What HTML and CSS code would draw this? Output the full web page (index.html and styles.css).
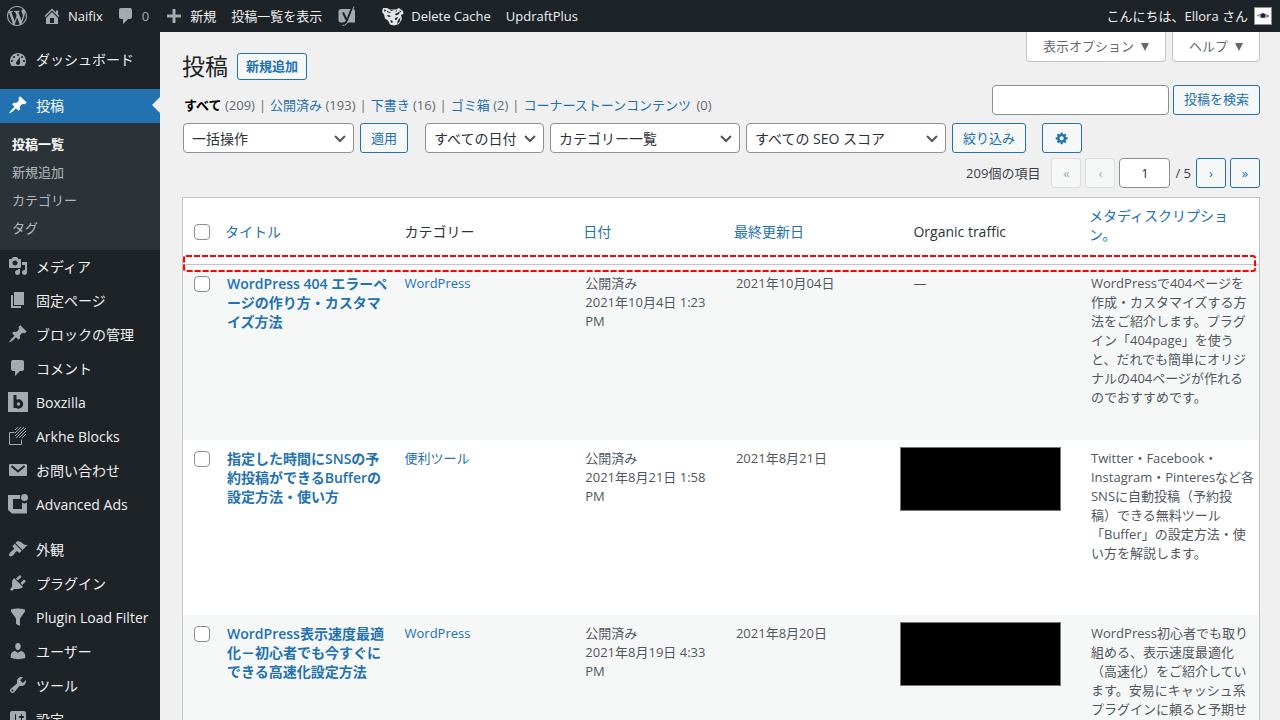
FILE: index.html
```html
<!DOCTYPE html>
<html lang="ja">
<head>
<meta charset="utf-8">
<meta name="viewport" content="width=device-width, initial-scale=1">
<title>投稿 ‹ Naifix — WordPress</title>
<link rel="stylesheet" href="styles.css">
</head>
<body>
<header class="adminbar">
  <a class="bar-item bar-wp" href="#" aria-label="WordPress"><svg class="icon" viewBox="0 0 20 20"><path d="M20 10c0-5.51-4.49-10-10-10C4.48 0 0 4.49 0 10c0 5.52 4.48 10 10 10 5.51 0 10-4.48 10-10zM7.78 15.37L4.37 6.22c.55-.02 1.17-.08 1.17-.08.5-.06.44-1.13-.06-1.11 0 0-1.45.11-2.37.11-.18 0-.37 0-.58-.01C4.12 2.69 6.87 1.11 10 1.11c2.33 0 4.45.87 6.05 2.34-.68-.11-1.65.39-1.65 1.58 0 .74.45 1.36.9 2.1.35.61.55 1.36.55 2.46 0 1.49-1.4 5-1.4 5l-3.03-8.37c.54-.02.82-.17.82-.17.5-.05.44-1.25-.06-1.22 0 0-1.44.12-2.38.12-.87 0-2.33-.12-2.33-.12-.5-.03-.56 1.2-.06 1.22l.92.08 1.26 3.41zM17.41 10c.24-.64.74-1.87.43-4.25.7 1.29 1.05 2.71 1.05 4.25 0 3.29-1.73 6.24-4.4 7.78.97-2.59 1.94-5.2 2.92-7.78zM6.1 18.09C3.12 16.65 1.11 13.53 1.11 10c0-1.3.23-2.48.72-3.59C3.25 10.3 4.67 14.2 6.1 18.09zm4.03-6.63l2.58 6.98c-.86.29-1.76.45-2.71.45-.79 0-1.57-.11-2.29-.33.81-2.38 1.62-4.74 2.42-7.1z"/></svg></a>
  <a class="bar-item bar-site" href="#"><svg class="icon" viewBox="0 0 20 20"><path d="M16 8.5l1.53 1.53-1.06 1.06L10 4.6l-6.47 6.49-1.06-1.06L10 2.5l4 4v-2h2v4zm-6-2.46l6 5.99V18H4v-5.97zM12 17v-5H8v5h4z"/></svg>Naifix</a>
  <a class="bar-item bar-comments" href="#"><svg class="icon" viewBox="0 0 20 20"><path d="M5 2h9c1.1 0 2 .9 2 2v7c0 1.1-.9 2-2 2h-2l-5 5v-5H5c-1.1 0-2-.9-2-2V4c0-1.1.9-2 2-2z"/></svg><span class="dim">0</span></a>
  <a class="bar-item bar-new" href="#"><svg class="icon" viewBox="0 0 20 20"><path d="M8.500 3h3v5.500H17v3h-5.500V17h-3v-5.500H3v-3h5.500z"/></svg>新規</a>
  <a class="bar-item bar-view" href="#">投稿一覧を表示</a>
  <a class="bar-item bar-seo" href="#" aria-label="SEO"><svg class="icon" viewBox="0 0 20 20"><path d="M4 3h11.500A2.500 2.500 0 0 1 18 5.500v11H4A2.500 2.500 0 0 1 1.500 14V5.500A2.500 2.500 0 0 1 4 3z"/><path class="seo-cut" d="M6 6.500l3.300 7M15.500 1L10 14.500Q8.800 17.500 5.500 18"/><path class="seo-edge" d="M17 .5L11.500 14.500Q10 19.300 5.500 19.500"/></svg></a>
  <a class="bar-item bar-cache" href="#"><svg class="icon-tiger" viewBox="0 0 24 20"><path class="tiger-face" d="M2 2l4 0 3 1.500h6L18 2l4 3 .5 3-2.500 1 1 4-3 5-5 1.500-4-1-2-4-3-2-1-4L1 6z"/><path class="tiger-mark" d="M3 3.500l2.500.5-2 2zM6 5l4 1.500-1 .5-3-1zM9 3.800l4 .8-3 .3zM14 8l3-1.500 2-1-1 2.500-3 1.500zM6 9l3 .6.6 1.500-2.600-.4zM14 12l3-1-1 2.500-2 .5zM18.500 4l1.800 1.500-1.300 1zM9 14.500l2 0 1 1.800-1.500.6zM17 14l2.500-2.500-1 4.500-2.500 2zM14.500 5l2-1-1.500 2z"/></svg>Delete Cache</a>
  <a class="bar-item" href="#">UpdraftPlus</a>
  <a class="bar-item bar-user" href="#">こんにちは、Ellora さん<svg class="avatar" viewBox="0 0 18 18"><rect class="avatar-bg" width="18" height="18"/><path class="eye-lid" d="M3 9q5-4 12 0-5 3-9 1"/><circle class="eye" cx="9" cy="8.500" r="2.300"/></svg></a>
</header>
<div class="shell">
<nav class="menu" aria-label="メインメニュー">
  <a class="menu-item" href="#"><svg class="icon" viewBox="0 0 20 20"><path fill-rule="evenodd" d="M3.760 17h12.480c1.100-1.370 1.760-3.110 1.760-5 0-4.420-3.580-8-8-8s-8 3.580-8 8c0 1.890.66 3.630 1.760 5zM10 5c.55 0 1 .45 1 1s-.45 1-1 1-1-.45-1-1 .45-1 1-1zM6 7c.55 0 1 .45 1 1s-.45 1-1 1-1-.45-1-1 .45-1 1-1zm8 0c.55 0 1 .45 1 1s-.45 1-1 1-1-.45-1-1 .45-1 1-1zm-5.370 5.550L12 8v6c0 1.100-.9 2-2 2s-2-.9-2-2c0-.57.24-1.080.63-1.450zM4 11c.55 0 1 .45 1 1s-.45 1-1 1-1-.45-1-1 .45-1 1-1zm12 0c.55 0 1 .45 1 1s-.45 1-1 1-1-.45-1-1 .45-1 1-1z"/></svg>ダッシュボード</a>
  <a class="menu-item current" href="#"><svg class="icon" viewBox="0 0 20 20"><path d="M10.440 3.020l1.820-1.820 6.360 6.350-1.830 1.820c-1.050-.68-2.480-.57-3.410.36l-.75.75c-.92.93-1.040 2.350-.35 3.410l-1.830 1.820-2.410-2.410-2.800 2.790c-.42.42-3.380 2.710-3.800 2.290s1.860-3.390 2.280-3.810l2.790-2.790L4.100 9.360l1.830-1.820c1.050.69 2.480.57 3.400-.36l.75-.75c.93-.92 1.050-2.350.36-3.410z"/></svg>投稿</a>
  <div class="submenu">
    <a class="submenu-item active" href="#">投稿一覧</a>
    <a class="submenu-item" href="#">新規追加</a>
    <a class="submenu-item" href="#">カテゴリー</a>
    <a class="submenu-item" href="#">タグ</a>
  </div>
  <a class="menu-item" href="#"><svg class="icon" viewBox="0 0 20 20"><path fill-rule="evenodd" d="M13 11V4c0-.55-.45-1-1-1h-1.670L9 1H5L3.670 3H2c-.55 0-1 .45-1 1v7c0 .55.45 1 1 1h10c.55 0 1-.45 1-1zM7 4.500c1.380 0 2.500 1.120 2.500 2.500S8.380 9.500 7 9.500 4.500 8.380 4.500 7 5.620 4.500 7 4.500zM14 6h5v10.500c0 1.380-1.120 2.500-2.500 2.500S14 17.880 14 16.500s1.120-2.500 2.500-2.500c.17 0 .34.020.5.050V9h-3V6zm-4 8.050V13h2v3.500c0 1.380-1.120 2.500-2.500 2.500S7 17.880 7 16.500 8.120 14 9.500 14c.17 0 .34.020.5.050z"/></svg>メディア</a>
  <a class="menu-item" href="#"><svg class="icon" viewBox="0 0 20 20"><path d="M6 15V2h10v13H6zm-1 1h8v2H3V5h2v11z"/></svg>固定ページ</a>
  <a class="menu-item" href="#"><svg class="icon" viewBox="0 0 20 20"><path d="M10.440 3.020l1.820-1.820 6.360 6.350-1.830 1.820c-1.050-.68-2.480-.57-3.410.36l-.75.75c-.92.93-1.040 2.350-.35 3.410l-1.830 1.820-2.410-2.410-2.800 2.790c-.42.42-3.380 2.710-3.800 2.290s1.860-3.390 2.280-3.810l2.790-2.790L4.100 9.360l1.830-1.820c1.050.69 2.480.57 3.400-.36l.75-.75c.93-.92 1.050-2.350.36-3.410z"/></svg>ブロックの管理</a>
  <a class="menu-item" href="#"><svg class="icon" viewBox="0 0 20 20"><path d="M5 2h9c1.100 0 2 .9 2 2v7c0 1.100-.9 2-2 2h-2l-5 5v-5H5c-1.100 0-2-.9-2-2V4c0-1.100.9-2 2-2z"/></svg>コメント</a>
  <a class="menu-item" href="#"><svg class="icon" viewBox="0 0 20 20"><rect width="20" height="20"/><path class="cut" d="M7 3v13"/><circle class="cut" cx="10.500" cy="12" r="3.200"/></svg>Boxzilla</a>
  <a class="menu-item" href="#"><svg class="icon" viewBox="0 0 20 20"><path class="line" d="M6.500 6.500h-5v12h12v-5"/><path class="line" d="M7 4l3-3M7 7l6-6M7 10l9-9M8 12L18 2M11 12l7-7M14 12l4-4"/></svg>Arkhe Blocks</a>
  <a class="menu-item" href="#"><svg class="icon" viewBox="0 0 20 20"><rect x="1" y="4" width="18" height="12" rx="1"/><path class="cut-thin" d="M3.500 6l6.500 5.500L16.500 6"/></svg>お問い合わせ</a>
  <a class="menu-item" href="#"><svg class="icon" viewBox="0 0 20 20"><path d="M0 1h12.500a4 4 0 0 0 0 4H5v10h9V8.500a4 4 0 0 0 5 0V19.500H4L0 16z"/><circle cx="16.500" cy="3.500" r="3.500"/></svg>Advanced Ads</a>
  <div class="menu-gap"></div>
  <a class="menu-item" href="#"><svg class="icon" viewBox="0 0 20 20"><path d="M14.480 11.060L7.410 3.990l1.500-1.500c.5-.56 2.300-.47 3.510.32 1.210.8 1.430 1.280 2.910 2.100 1.180.64 2.450 1.260 4.450.85zm-.71.71L6.700 4.700 4.930 6.470c-.39.39-.39 1.020 0 1.410l1.060 1.060c.39.39.39 1.030 0 1.420-.6.6-1.430 1.110-2.210 1.690-.35.26-.7.53-1.010.84C1.430 14.230.4 16.080 1.400 17.070c.99 1 2.840-.03 4.180-1.360.31-.31.58-.66.85-1.020.57-.78 1.080-1.610 1.690-2.210.39-.39 1.020-.39 1.410 0l1.060 1.060c.39.39 1.020.39 1.410 0z"/></svg>外観</a>
  <a class="menu-item" href="#"><svg class="icon" viewBox="0 0 20 20"><path d="M13.110 4.360L9.870 7.600 8 5.730l3.240-3.240c.35-.34 1.050-.2 1.560.32.52.51.66 1.210.31 1.550zm-8 1.770l.91-1.120 9.010 9.010-1.190.84c-.71.71-2.630 1.160-3.820 1.160H6.140L4.900 17.260c-.59.59-1.540.59-2.120 0-.59-.58-.59-1.530 0-2.120l1.240-1.240v-3.880c0-1.130.4-3.190 1.090-3.890zm7.260 3.970l3.240-3.240c.34-.35 1.040-.21 1.550.31.52.51.66 1.210.31 1.550l-3.240 3.250z"/></svg>プラグイン</a>
  <a class="menu-item" href="#"><svg class="icon" viewBox="0 0 20 20"><path d="M3 4.500v-2s3.340-1 7-1 7 1 7 1v2l-5 7.030v6.970s-1.220-.09-2.250-.59S8 16.500 8 16.500v-4.970z"/></svg>Plugin Load Filter</a>
  <a class="menu-item" href="#"><svg class="icon" viewBox="0 0 20 20"><path d="M10 9.250c-2.270 0-2.730-3.440-2.730-3.440C7 4.020 7.820 2 9.970 2c2.160 0 2.980 2.020 2.710 3.810 0 0-.41 3.440-2.680 3.440zm0 2.570L12.720 10c2.390 0 4.520 2.330 4.520 4.530v2.490s-3.650 1.130-7.240 1.130c-3.650 0-7.240-1.130-7.240-1.130v-2.490c0-2.250 1.940-4.480 4.470-4.480z"/></svg>ユーザー</a>
  <a class="menu-item" href="#"><svg class="icon" viewBox="0 0 20 20"><path d="M16.680 9.770c-1.340 1.340-3.300 1.670-4.950.99l-5.410 6.520c-.99.99-2.590.99-3.580 0s-.99-2.590 0-3.570l6.520-5.420c-.68-1.650-.35-3.610.99-4.950 1.280-1.280 3.120-1.620 4.720-1.060l-2.890 2.890 2.820 2.820 2.860-2.870c.53 1.580.18 3.390-1.080 4.650zM3.810 16.210c.4.39 1.040.39 1.430 0 .4-.4.4-1.040 0-1.430-.39-.4-1.030-.4-1.430 0-.39.39-.39 1.030 0 1.430z"/></svg>ツール</a>
  <a class="menu-item" href="#"><svg class="icon" viewBox="0 0 20 20"><path d="M18 16V4c0-1.100-.9-2-2-2H4c-1.100 0-2 .9-2 2v12c0 1.100.9 2 2 2h12c1.100 0 2-.9 2-2zM8 11h1c.55 0 1 .45 1 1s-.45 1-1 1H8v1.500c0 .28-.22.5-.5.5s-.5-.22-.5-.5V13H6c-.55 0-1-.45-1-1s.45-1 1-1h1V5.500c0-.28.22-.5.5-.5s.5.22.5.5V11zm5-2h-1c-.55 0-1-.45-1-1s.45-1 1-1h1V5.500c0-.28.22-.5.5-.5s.5.22.5.5V7h1c.55 0 1 .45 1 1s-.45 1-1 1h-1v5.500c0 .28-.22.5-.5.5s-.5-.22-.5-.5V9z"/></svg>設定</a>
</nav>
<main class="content">
  <div class="page-head">
    <div class="heading"><h1>投稿</h1><a class="add-new" href="#">新規追加</a></div>
    <div class="screen-tabs"><button class="screen-tab" type="button">表示オプション<span class="caret"></span></button><button class="screen-tab" type="button">ヘルプ<span class="caret"></span></button></div>
  </div>
  <div class="views-row">
    <ul class="views">
      <li><a class="all" href="#">すべて</a> <span>(209)</span></li>
      <li><a href="#">公開済み</a> <span>(193)</span></li>
      <li><a href="#">下書き</a> <span>(16)</span></li>
      <li><a href="#">ゴミ箱</a> <span>(2)</span></li>
      <li><a href="#">コーナーストーンコンテンツ</a> <span class="last-count">(0)</span></li>
    </ul>
    <form class="search"><input class="field search-field" type="search" aria-label="投稿を検索"><button class="button" type="button">投稿を検索</button></form>
  </div>
  <div class="filters">
    <select class="field bulk" aria-label="一括操作"><option>一括操作</option></select>
    <button class="button apply" type="button">適用</button>
    <select class="field dates" aria-label="日付"><option>すべての日付</option></select>
    <select class="field cats" aria-label="カテゴリー"><option>カテゴリー一覧</option></select>
    <select class="field seo" aria-label="SEO スコア"><option>すべての SEO スコア</option></select>
    <button class="button" type="button">絞り込み</button>
    <button class="button gear" type="button" aria-label="設定"><svg class="icon-gear" viewBox="0 0 20 20"><path d="M18 12h-2.180c-.17.7-.44 1.350-.81 1.930l1.540 1.540-2.100 2.100-1.540-1.540c-.58.36-1.230.63-1.910.79V19H8v-2.180c-.68-.16-1.330-.43-1.910-.79l-1.540 1.540-2.120-2.120 1.540-1.540c-.36-.58-.63-1.230-.79-1.910H1V9.030h2.170c.16-.7.44-1.350.8-1.940L2.430 5.550l2.100-2.100 1.540 1.540c.58-.37 1.240-.64 1.930-.81V2h3v2.180c.68.16 1.330.43 1.910.79l1.540-1.540 2.120 2.120-1.540 1.540c.36.59.64 1.240.8 1.940H18V12zm-8.500 1.500c1.660 0 3-1.340 3-3s-1.340-3-3-3-3 1.340-3 3 1.340 3 3 3z"/></svg></button>
  </div>
  <div class="pager">
    <span class="total">209個の項目</span>
    <button class="button page-button" type="button" disabled>«</button>
    <button class="button page-button" type="button" disabled>‹</button>
    <input class="field page-field" type="text" value="1" aria-label="現在のページ">
    <span class="pages">/ 5</span>
    <button class="button page-button" type="button">›</button>
    <button class="button page-button" type="button">»</button>
  </div>
  <div class="table-wrap">
  <table class="posts">
    <colgroup><col class="col-check"><col class="col-wide"><col class="col-cats"><col class="col-date"><col class="col-wide"><col class="col-wide"><col></colgroup>
    <thead><tr>
      <th class="check"><input type="checkbox" aria-label="すべて選択"></th>
      <th><a href="#">タイトル</a></th>
      <th class="plain">カテゴリー</th>
      <th><a href="#">日付</a></th>
      <th><a href="#">最終更新日</a></th>
      <th class="plain">Organic traffic</th>
      <th class="meta-head"><a href="#">メタディスクリプショ<br>ン。</a></th>
    </tr></thead>
    <tbody>
      <tr>
        <td class="check"><input type="checkbox" aria-label="WordPress 404 を選択"></td>
        <td><a class="title" href="#">WordPress 404 エラーペ<br>ージの作り方・カスタマ<br>イズ方法</a></td>
        <td><a href="#">WordPress</a></td>
        <td>公開済み<br>2021年10月4日 1:23 PM</td>
        <td>2021年10月04日</td>
        <td>—</td>
        <td class="meta">WordPressで404ページを<br>作成・カスタマイズする方<br>法をご紹介します。プラグ<br>イン「404page」を使う<br>と、だれでも簡単にオリジ<br>ナルの404ページが作れる<br>のでおすすめです。</td>
      </tr>
      <tr>
        <td class="check"><input type="checkbox" aria-label="Buffer を選択"></td>
        <td><a class="title" href="#">指定した時間にSNSの予<br>約投稿ができるBufferの<br>設定方法・使い方</a></td>
        <td><a href="#">便利ツール</a></td>
        <td>公開済み<br>2021年8月21日 1:58 PM</td>
        <td>2021年8月21日</td>
        <td class="traffic"><div class="redacted"></div></td>
        <td class="meta">Twitter・Facebook・<br>Instagram・Pinteresなど各<br>SNSに自動投稿（予約投<br>稿）できる無料ツール<br>「Buffer」の設定方法・使<br>い方を解説します。</td>
      </tr>
      <tr>
        <td class="check"><input type="checkbox" aria-label="高速化設定を選択"></td>
        <td><a class="title" href="#">WordPress表示速度最適<br>化－初心者でも今すぐに<br>できる高速化設定方法</a></td>
        <td><a href="#">WordPress</a></td>
        <td>公開済み<br>2021年8月19日 4:33 PM</td>
        <td>2021年8月20日</td>
        <td class="traffic"><div class="redacted"></div></td>
        <td class="meta">WordPress初心者でも取り<br>組める、表示速度最適化<br>（高速化）をご紹介してい<br>ます。安易にキャッシュ系<br>プラグインに頼ると予期せ</td>
      </tr>
    </tbody>
  </table>
  <svg class="highlight"><rect width="100%" height="100%" rx="2"/></svg>
  </div>
</main>
</div>
</body>
</html>
```

FILE: styles.css
```css
* { box-sizing: border-box; }
html, body { height: 100%; }
body {
  margin: 0;
  display: flex;
  flex-direction: column;
  overflow: hidden;
  background: #f0f0f1;
  color: #3c434a;
  font: 13px/19px "Open Sans", "Noto Sans CJK JP", sans-serif;
}
a { color: #2271b1; text-decoration: none; }
button, input, select { margin: 0; font: inherit; }
.icon { flex: none; width: 20px; height: 20px; fill: #a7aaad; }

/* Top bar */
.adminbar {
  flex: none;
  display: flex;
  align-items: center;
  height: 32px;
  padding: 0 8px 0 7px;
  background: #1d2327;
}
.bar-item { display: flex; align-items: center; gap: 6px; margin-right: 20px; color: #f0f0f1; white-space: nowrap; }
.bar-wp { margin-right: 15px; }
.bar-site { margin-right: 13px; }
.bar-comments { margin-right: 15px; }
.bar-new { margin-right: 15px; }
.bar-view { margin-right: 15px; }
.bar-seo { margin-right: 24px; }
.bar-cache { margin-right: 15px; }
.dim { color: #a7aaad; }
.bar-user { margin: 0 0 0 auto; }
.cut { fill: none; stroke: #1d2327; stroke-width: 3; }
.seo-cut, .cut-thin { fill: none; stroke: #1d2327; stroke-width: 2; }
.seo-edge, .line { fill: none; stroke: #a7aaad; }
.icon-tiger { width: 24px; height: 20px; }
.tiger-face { fill: #e4e4e4; }
.tiger-mark { fill: #1d2327; }
.avatar { width: 18px; height: 18px; }
.avatar-bg { fill: #fff; stroke: #8c8f94; stroke-width: 2; }
.eye-lid { fill: #b9b4bd; stroke: #77717f; }
.eye { fill: #1e1e46; }

/* Side menu */
.shell { flex: 1; display: flex; min-height: 0; }
.menu { flex: none; width: 160px; padding-top: 11px; overflow: hidden; background: #1d2327; font-size: 14px; }
.menu-item { position: relative; display: flex; align-items: center; gap: 8px; height: 34px; padding: 0 0 2px 8px; color: #f0f0f1; white-space: nowrap; }
.menu-item.current { margin-top: 12px; background: #2271b1; color: #fff; }
.current .icon { fill: #fff; }
.current::after {
  content: "";
  position: absolute;
  right: 0;
  border: 8px solid transparent;
  border-right-color: #f0f0f1;
  border-left: 0;
}
.submenu { padding: 7px 0 8px; background: #2c3338; font-size: 13px; }
.submenu-item { display: flex; align-items: center; height: 28px; padding-left: 12px; color: #b4b9be; }
.submenu-item.active { color: #fff; font-weight: 600; }
.menu-gap { height: 11px; }

/* Page heading */
.content { flex: 1; min-width: 0; padding: 0 20px 0 22px; overflow: hidden; }
.page-head { display: flex; justify-content: space-between; min-height: 52px; }
.heading { display: flex; align-items: center; gap: 9px; padding-top: 16px; }
h1 { margin: 0; color: #1d2327; font-size: 23px; font-weight: 400; line-height: 30px; }
.add-new { padding: 3px 8px; border: 1px solid #2271b1; border-radius: 3px; background: #f6f7f7; font-weight: 600; }
.screen-tabs { display: flex; align-items: flex-start; gap: 6px; }
.screen-tab {
  display: flex;
  align-items: center;
  gap: 7px;
  height: 30px;
  padding: 0 16px;
  border: 1px solid #c3c4c7;
  border-top: 0;
  border-radius: 0 0 4px 4px;
  background: #fff;
  color: #646970;
}
.caret { border: 4px solid transparent; border-top: 8px solid #646970; border-bottom: 0; }

/* Views and search */
.views-row { display: flex; justify-content: space-between; align-items: center; }
.views { display: flex; margin: 0; padding: 12px 0 0 2px; list-style: none; color: #646970; }
.views li { white-space: nowrap; }
.views li + li::before { content: "|"; padding: 0 4px; }
.views .all { color: #000; font-weight: 600; }
.last-count { padding-left: 2px; }
.search { display: flex; gap: 4px; }
.field { height: 30px; border: 1px solid #8c8f94; border-radius: 4px; background-color: #fff; color: #2c3338; font-size: 14px; }
.search-field { width: 177px; }
.button {
  height: 30px;
  padding: 0 10px;
  border: 1px solid #2271b1;
  border-radius: 3px;
  background: #f6f7f7;
  color: #2271b1;
  white-space: nowrap;
}
.filters { display: flex; margin-top: 8px; gap: 6px; padding-left: 1px; }
select.field {
  appearance: none;
  padding: 0 24px 0 8px;
  background-image: url("data:image/svg+xml,%3Csvg xmlns='http://www.w3.org/2000/svg' viewBox='0 0 16 16'%3E%3Cpath d='M3 6l5 5 5-5' fill='none' stroke='%23555' stroke-width='2'/%3E%3C/svg%3E");
  background-repeat: no-repeat;
  background-position: right 5px center;
  background-size: 16px;
}
.bulk { width: 171px; }
.apply { margin-right: 11px; }
.dates { width: 119px; }
.cats { width: 190px; }
.seo { width: 200px; }
.gear { display: flex; align-items: center; justify-content: center; width: 40px; margin-left: 10px; }
.icon-gear { flex: none; width: 14px; height: 14px; fill: #2271b1; }

/* Pagination */
.pager { display: flex; align-items: center; justify-content: flex-end; gap: 4px; margin-top: 5px; }
.total { margin-right: 7px; }
.page-button { width: 30px; padding: 0; }
.page-button:disabled { border-color: #dcdcde; color: #a7aaad; }
.page-field { width: 51px; text-align: center; font-size: 13px; }
.pages { margin: 0 1px; }

/* Posts table */
.table-wrap { position: relative; margin-top: 9px; }
.posts { width: 100%; table-layout: fixed; border: 1px solid #c3c4c7; border-spacing: 0; background: #fff; }
.col-check { width: 34px; }
.col-wide { width: 16.5%; }
.col-cats { width: 16.8%; }
.col-date { width: 14%; }
.posts th { height: 67px; padding: 0; border-bottom: 1px solid #c3c4c7; color: #2c3338; font-size: 14px; font-weight: 400; text-align: left; }
.posts th a { display: block; padding: 8px; }
.posts th.plain { padding-left: 10px; }
.posts .meta-head a { padding-bottom: 20px; }
.posts td { height: 175px; padding: 9px 10px; color: #50575e; vertical-align: top; }
.posts .meta { padding-right: 4px; white-space: nowrap; }
.posts .check { padding-right: 0; }
.posts th.check { padding-left: 10px; }
.posts tbody tr:nth-child(odd) { background: #f6f7f7; }
.posts .traffic { padding: 7px; }
.title { display: block; margin-right: -8px; font-size: 14px; font-weight: 600; }
.redacted { width: 161px; height: 64px; margin-left: -10px; border: 1px solid #777; background: #000; }
input[type="checkbox"] { appearance: none; display: block; width: 16px; height: 16px; margin: 2px 0 0 1px; border: 1px solid #8c8f94; border-radius: 4px; background: #fff; }
.highlight { position: absolute; top: 59px; left: 2px; width: calc(100% - 7px); height: 15px; overflow: visible; }
.highlight rect { fill: none; stroke: #f00; stroke-width: 2; stroke-dasharray: 6 2; }
```
